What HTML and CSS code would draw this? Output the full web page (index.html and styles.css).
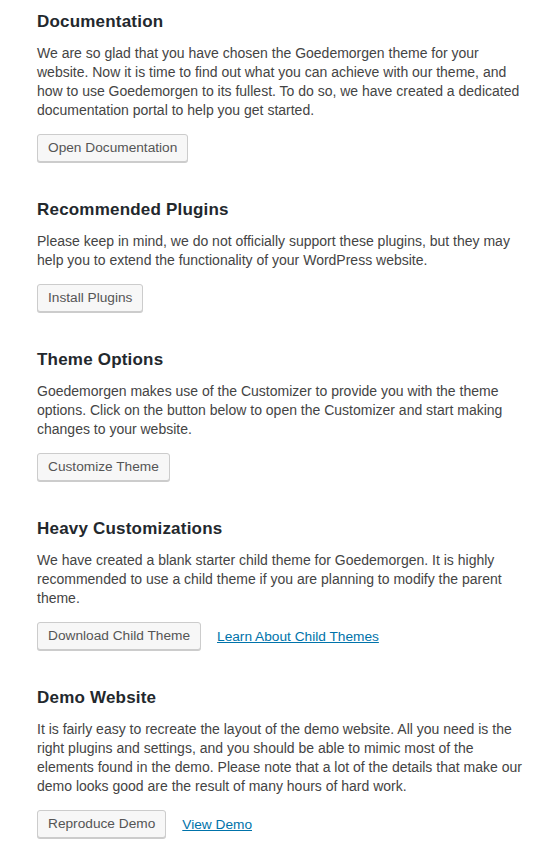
FILE: index.html
```html
<!DOCTYPE html>
<html lang="en">
<head>
<meta charset="utf-8">
<title>Goedemorgen – Getting Started</title>
<link rel="stylesheet" href="styles.css">
</head>
<body>
<main class="guide">
  <section class="section">
    <h2 class="section-title">Documentation</h2>
    <p class="section-text">We are so glad that you have chosen the Goedemorgen theme for your website. Now it is time to find out what you can achieve with our theme, and how to use Goedemorgen to its fullest. To do so, we have created a dedicated documentation portal to help you get started.</p>
    <div class="actions"><a class="button" href="#">Open Documentation</a></div>
  </section>
  <section class="section">
    <h2 class="section-title">Recommended Plugins</h2>
    <p class="section-text">Please keep in mind, we do not officially support these plugins, but they may help you to extend the functionality of your WordPress website.</p>
    <div class="actions"><a class="button" href="#">Install Plugins</a></div>
  </section>
  <section class="section">
    <h2 class="section-title">Theme Options</h2>
    <p class="section-text">Goedemorgen makes use of the Customizer to provide you with the theme options. Click on the button below to open the Customizer and start making changes to your website.</p>
    <div class="actions"><a class="button" href="#">Customize Theme</a></div>
  </section>
  <section class="section">
    <h2 class="section-title">Heavy Customizations</h2>
    <p class="section-text">We have created a blank starter child theme for Goedemorgen. It is highly recommended to use a child theme if you are planning to modify the parent theme.</p>
    <div class="actions"><a class="button" href="#">Download Child Theme</a><a class="link" href="#">Learn About Child Themes</a></div>
  </section>
  <section class="section">
    <h2 class="section-title">Demo Website</h2>
    <p class="section-text">It is fairly easy to recreate the layout of the demo website. All you need is the right plugins and settings, and you should be able to mimic most of the elements found in the demo. Please note that a lot of the details that make our demo looks good are the result of many hours of hard work.</p>
    <div class="actions"><a class="button" href="#">Reproduce Demo</a><a class="link" href="#">View Demo</a></div>
  </section>
</main>
</body>
</html>
```
FILE: styles.css
```css
html, body {
  margin: 0;
  padding: 0;
  background: #ffffff;
}

body {
  font-family: "Liberation Sans", Arial, sans-serif;
  color: #444444;
}

.guide {
  width: 490px;
  padding: 10px 0 0 37px;
}

.section {
  margin-bottom: 36px;
}

.section-title {
  margin: 0 0 10px;
  font-size: 17px;
  line-height: 24px;
  font-weight: 700;
  letter-spacing: 0.2px;
  color: #23282d;
}

.section-text {
  margin: 0 0 14px;
  font-size: 14px;
  line-height: 19px;
}

.actions {
  display: flex;
  align-items: center;
  gap: 16px;
}

.button {
  display: inline-block;
  box-sizing: border-box;
  height: 28px;
  padding: 0 10px 1px;
  font-size: 13.7px;
  line-height: 26px;
  color: #555555;
  text-decoration: none;
  background: #f7f7f7;
  border: 1px solid #cccccc;
  border-radius: 3px;
  box-shadow: 0 1px 0 #cccccc;
  white-space: nowrap;
}

.link {
  font-size: 13.7px;
  line-height: 19px;
  color: #0073aa;
  text-decoration: underline;
}
```
